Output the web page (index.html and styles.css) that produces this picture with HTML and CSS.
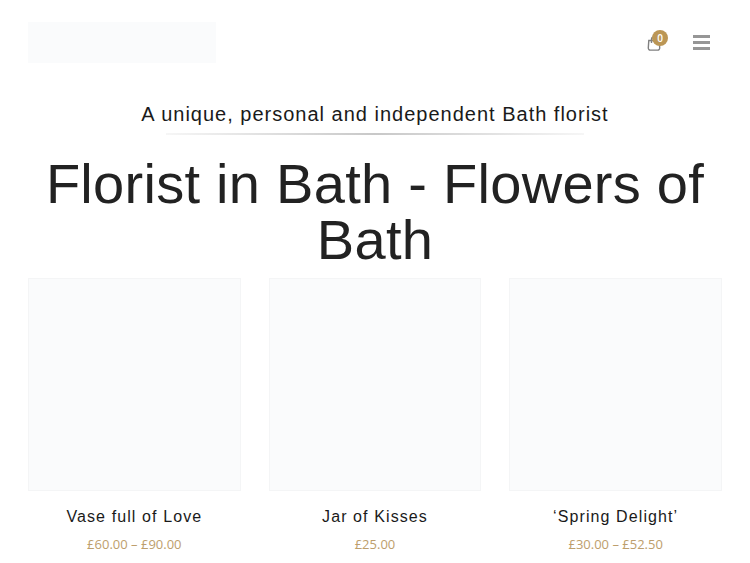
FILE: index.html
```html
<!DOCTYPE html>
<html lang="en">
<head>
    <meta charset="UTF-8">
    <meta name="viewport" content="width=device-width, initial-scale=1.0">
    <title>Florist in Bath - Flowers of Bath</title>
    <link rel="stylesheet" href="styles.css">
</head>
<body>
    <div class="header">
        <div class="logo"></div>
        <div class="header-icons">
            <a class="cart" href="#">
                <svg class="cart-icon" width="14" height="15" viewBox="0 0 14 15" fill="none" stroke="#808080" stroke-width="1.4">
                    <path d="M1.8 4.5h10.4l.5 7.4a2 2 0 0 1-2 2.2H3.3a2 2 0 0 1-2-2.2z"/>
                    <path d="M4.5 7V3.5a2.5 2.5 0 0 1 5 0V7"/>
                </svg>
                <span class="cart-count">0</span>
            </a>
            <a class="menu" href="#">
                <span></span>
                <span></span>
                <span></span>
            </a>
        </div>
    </div>

    <div class="intro">
        <p class="tagline">A unique, personal and independent Bath florist</p>
        <div class="divider"></div>
        <h1>Florist in Bath - Flowers of Bath</h1>
    </div>

    <div class="products">
        <div class="product">
            <div class="product-image"></div>
            <h3>Vase full of Love</h3>
            <p class="price">£60.00 – £90.00</p>
        </div>
        <div class="product">
            <div class="product-image"></div>
            <h3>Jar of Kisses</h3>
            <p class="price">£25.00</p>
        </div>
        <div class="product">
            <div class="product-image"></div>
            <h3>‘Spring Delight’</h3>
            <p class="price">£30.00 – £52.50</p>
        </div>
    </div>
</body>
</html>
```

FILE: styles.css
```css
* {
    margin: 0;
    padding: 0;
    box-sizing: border-box;
}
html, body {
    height: 563px;
    overflow: hidden;
}
body {
    font-family: "Liberation Sans", Arial, sans-serif;
    color: #222;
    background-color: white;
}
.header {
    display: flex;
    justify-content: space-between;
    align-items: center;
    padding: 22px 40px 0 28px;
}
.logo {
    width: 188px;
    height: 41px;
    background-color: #fafbfc;
}
.header-icons {
    display: flex;
    align-items: center;
    gap: 32px;
}
.cart {
    position: relative;
    display: block;
    width: 14px;
    height: 15px;
    margin-top: 2px;
}
.cart-icon {
    display: block;
}
.cart-count {
    position: absolute;
    top: -6px;
    left: 5px;
    width: 16px;
    height: 16px;
    border-radius: 50%;
    background-color: #bb9655;
    color: white;
    font-family: "Open Sans", sans-serif;
    font-size: 10px;
    font-weight: 600;
    line-height: 16px;
    text-align: center;
}
.menu {
    display: flex;
    flex-direction: column;
    gap: 3px;
    width: 17px;
}
.menu span {
    display: block;
    height: 3px;
    background-color: #969696;
}
.intro {
    margin-top: 39px;
    text-align: center;
}
.tagline {
    font-size: 20px;
    line-height: 24px;
    letter-spacing: 1px;
    color: #1a1a1a;
}
.divider {
    width: 418px;
    height: 2px;
    margin: 7px auto 0;
    background: linear-gradient(to right, #f6f6f6, #c8c8c8 50%, #f6f6f6);
}
h1 {
    margin-top: 21px;
    padding: 0 28px;
    font-size: 56px;
    font-weight: 400;
    line-height: 56px;
    letter-spacing: 0.28px;
}
.products {
    display: grid;
    grid-template-columns: repeat(3, 1fr);
    gap: 28px;
    margin-top: 10px;
    padding: 0 28px;
}
.product {
    text-align: center;
}
.product-image {
    height: 213px;
    background-color: #fafbfc;
    border: 1px solid #f4f5f6;
}
.product h3 {
    margin-top: 16px;
    font-size: 16px;
    font-weight: 400;
    line-height: 20px;
    letter-spacing: 1.1px;
    color: #1a1a1a;
}
.price {
    margin-top: 7px;
    font-family: "Open Sans", sans-serif;
    font-size: 13px;
    line-height: 20px;
    color: #bd9e6c;
}
```
